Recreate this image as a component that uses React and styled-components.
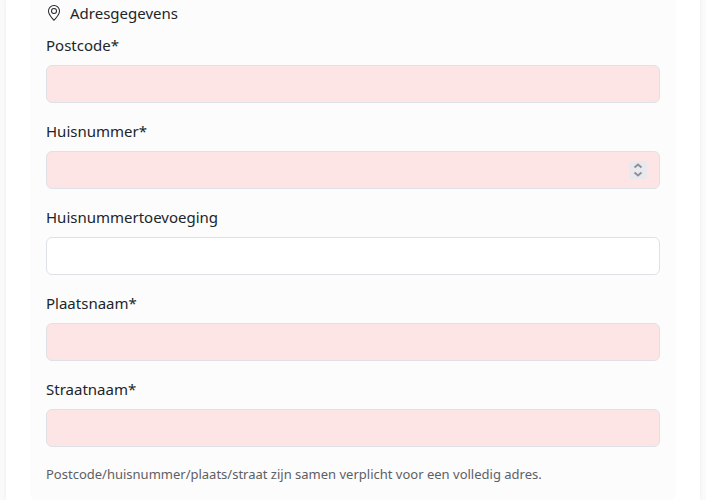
import React, { useId } from "react";
import styled, { createGlobalStyle } from "styled-components";

const GlobalStyle = createGlobalStyle`
  *, *::before, *::after { box-sizing: border-box; }
  body {
    margin: 0;
    background: #fafafa;
    color: #212529;
    font-family: "Segoe UI", "Noto Sans", "Open Sans", sans-serif;
    font-size: 15px;
    line-height: 24px;
  }
`;

const Page = styled.main`
  padding: 0 6px;
`;

const Card = styled.div`
  padding: 0 24px;
  background: #ffffff;
  box-shadow: 0 0 4px rgba(0, 0, 0, 0.06);
`;

const AddressForm = styled.form`
  display: flex;
  flex-direction: column;
  gap: 16px;
  padding: 1px 16px 14px;
  background: #fcfcfc;
  border-radius: 0 0 6px 6px;
`;

const FirstGroup = styled.div`
  display: flex;
  flex-direction: column;
  gap: 8px;
`;

const Heading = styled.h2`
  display: flex;
  align-items: center;
  gap: 8px;
  margin: 0;
  font-size: inherit;
  font-weight: 400;
`;

const Field = styled.div`
  display: flex;
  flex-direction: column;
  gap: 8px;
`;

const InputWrap = styled.div`
  position: relative;
  display: flex;
`;

const Input = styled.input`
  width: 100%;
  height: 38px;
  padding: 6px 12px;
  border: 1px solid #dee2e6;
  border-radius: 6px;
  background: ${({ required }) => (required ? "#fee5e5" : "#ffffff")};
  color: inherit;
  font: inherit;
  appearance: textfield;

  &::-webkit-inner-spin-button {
    display: none;
  }

  &:focus {
    outline: 2px solid #9ec5fe;
  }
`;

const Stepper = styled.div`
  position: absolute;
  top: 10px;
  right: 13px;
  display: flex;
  flex-direction: column;
  width: 18px;
  height: 18px;
  background: #e9e9ed;
`;

const StepButton = styled.button`
  display: flex;
  justify-content: center;
  align-items: center;
  height: 9px;
  padding: 0;
  border: 0;
  background: none;
  color: #8f8f9d;
`;

const Help = styled.p`
  margin: 0;
  color: #5c6065;
  font-size: 13px;
  line-height: 23px;
`;

function PinIcon() {
  return (
    <svg width="16" height="16" viewBox="0 0 16 16" fill="currentColor" aria-hidden="true">
      <path d="M12.166 8.94c-.524 1.062-1.234 2.12-1.96 3.07A32 32 0 0 1 8 14.58a32 32 0 0 1-2.206-2.57c-.726-.95-1.436-2.008-1.96-3.07C3.304 7.867 3 6.862 3 6a5 5 0 0 1 10 0c0 .862-.305 1.867-.834 2.94M8 16s6-5.686 6-10A6 6 0 0 0 2 6c0 4.314 6 10 6 10" />
      <path d="M8 8a2 2 0 1 1 0-4 2 2 0 0 1 0 4m0 1a3 3 0 1 0 0-6 3 3 0 0 0 0 6" />
    </svg>
  );
}

function Chevron({ points }) {
  return (
    <svg width="10" height="9" viewBox="0 0 10 9" fill="none" stroke="currentColor" strokeWidth="2" aria-hidden="true">
      <polyline points={points} />
    </svg>
  );
}

function FormField({ label, name, required, type = "text" }) {
  const id = useId();
  const input = React.useRef(null);
  return (
    <Field>
      <label htmlFor={id}>
        {label}
        {required && "*"}
      </label>
      <InputWrap>
        <Input ref={input} id={id} name={name} type={type} required={required} />
        {type === "number" && (
          <Stepper>
            <StepButton type="button" tabIndex={-1} aria-label="Verhogen" onClick={() => input.current.stepUp()}>
              <Chevron points="1.5,6.5 5,3.5 8.5,6.5" />
            </StepButton>
            <StepButton type="button" tabIndex={-1} aria-label="Verlagen" onClick={() => input.current.stepDown()}>
              <Chevron points="1.5,2.5 5,5.5 8.5,2.5" />
            </StepButton>
          </Stepper>
        )}
      </InputWrap>
    </Field>
  );
}

export default function App() {
  return (
    <>
      <GlobalStyle />
      <Page>
        <Card>
          <AddressForm noValidate>
            <FirstGroup>
              <Heading>
                <PinIcon />
                Adresgegevens
              </Heading>
              <FormField label="Postcode" name="postcode" required />
            </FirstGroup>
            <FormField label="Huisnummer" name="huisnummer" type="number" required />
            <FormField label="Huisnummertoevoeging" name="toevoeging" />
            <FormField label="Plaatsnaam" name="plaatsnaam" required />
            <FormField label="Straatnaam" name="straatnaam" required />
            <Help>Postcode/huisnummer/plaats/straat zijn samen verplicht voor een volledig adres.</Help>
          </AddressForm>
        </Card>
      </Page>
    </>
  );
}
